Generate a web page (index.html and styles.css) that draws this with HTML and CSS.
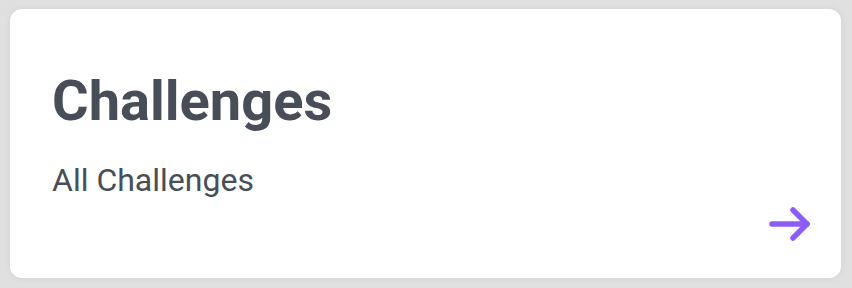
FILE: index.html
```html
<!DOCTYPE html>
<html>
<head>
<meta charset="utf-8">
<link rel="stylesheet" href="styles.css">
</head>
<body>
<div class="card">
  <h1 class="title">Challenges</h1>
  <p class="sub">All Challenges</p>
  <div class="foot">
    <svg class="arrow" width="48" height="40" viewBox="0 0 48 40" fill="none" stroke="#8b5cf6" stroke-width="5.5" stroke-linecap="round" stroke-linejoin="round">
      <path d="M6 20 H41"/>
      <path d="M27 6 L41 20 L27 34"/>
    </svg>
  </div>
</div>
</body>
</html>
```

FILE: styles.css
```css
html, body {
  margin: 0;
  padding: 0;
}
body {
  background: #e0e0e0;
  width: 852px;
  height: 288px;
  padding: 9px 11px 10px 10px;
  box-sizing: border-box;
  font-family: Roboto, "Liberation Sans", sans-serif;
}
.card {
  background: #fff;
  border-radius: 12px;
  height: 269px;
  box-sizing: border-box;
  padding: 64px 27px 34px 42px;
  box-shadow: 0 0 8px rgba(0,0,0,0.06);
  display: flex;
  flex-direction: column;
}
.title {
  margin: 0;
  font-size: 56px;
  font-weight: 700;
  color: #474e57;
  line-height: 1;
}
.sub {
  margin: 35px 0 0 0;
  font-size: 32px;
  color: #474e57;
  line-height: 1;
}
.foot {
  display: flex;
  justify-content: flex-end;
  margin-top: auto;
}
.arrow {
  display: block;
}
```
